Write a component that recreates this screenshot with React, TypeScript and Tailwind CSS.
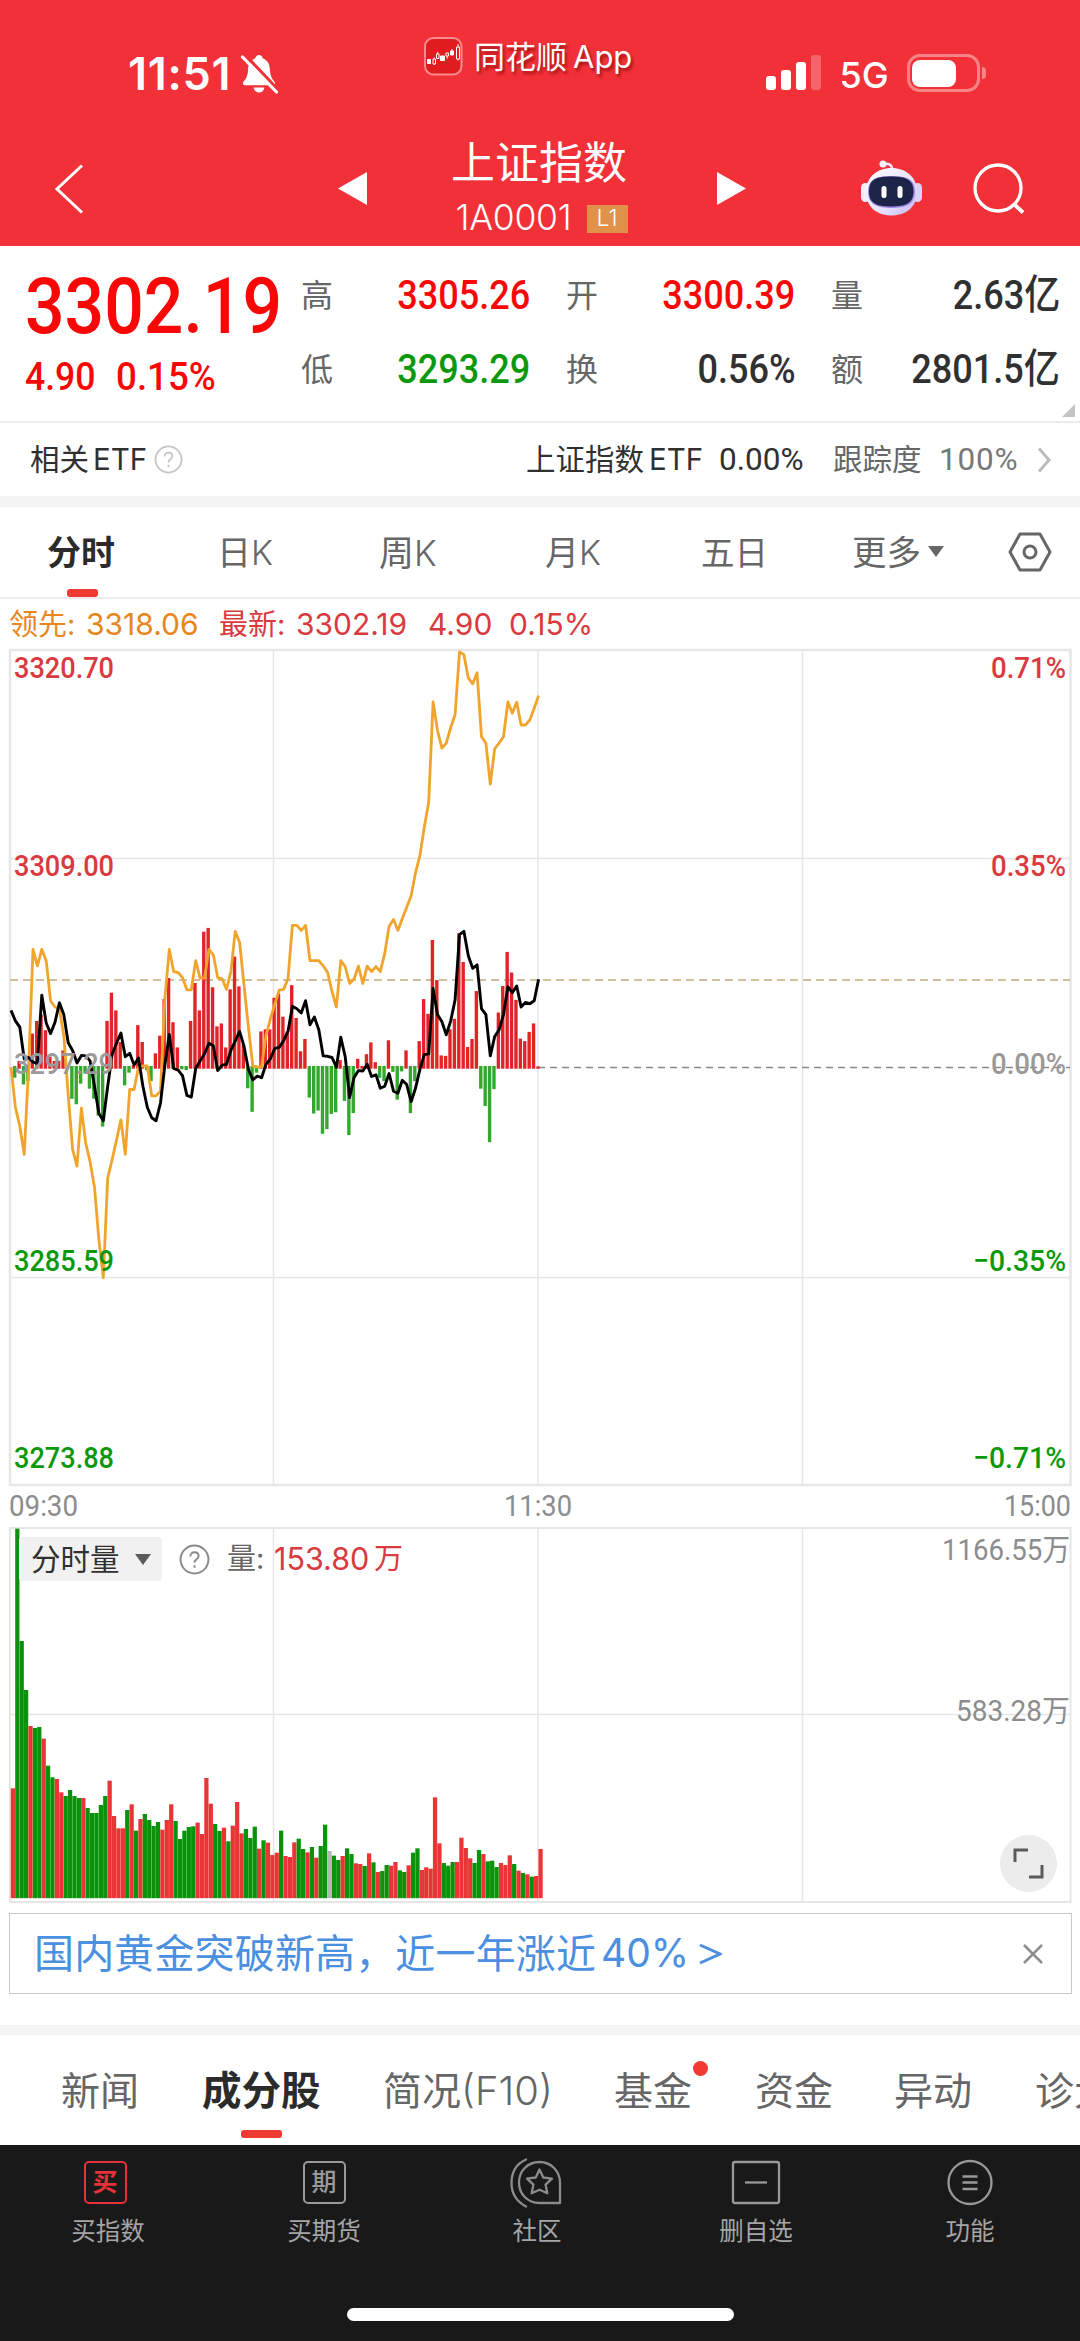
import type { ReactNode } from "react";

const SANS = "font-[Inter,'Noto_Sans_CJK_SC',sans-serif]";
const DIN = "Roboto, 'Noto Sans CJK SC', sans-serif";

/* ---------- intraday series, one value per minute from 09:30 to 11:30 ---------- */

const LEAD = [
  1015, 1110, 1155, 1222, 1015, 735, 774, 735, 762, 858, 872, 876, 940, 1080, 1210, 1250, 1112, 1195, 1240, 1300,
  1425, 1515, 1278, 1235, 1188, 1140, 1222, 1068, 1068, 1015, 1012, 1012, 1083, 1083, 1072, 850, 735, 788, 790, 802,
  831, 831, 762, 803, 803, 735, 748, 802, 805, 830, 788, 692, 718, 820, 920, 1012, 1014, 1014, 940, 900,
  865, 832, 830, 805, 678, 678, 690, 678, 762, 762, 762, 774, 790, 835, 872, 762, 776, 816, 806, 775,
  816, 775, 788, 776, 788, 745, 680, 664, 690, 662, 635, 608, 553, 512, 445, 385, 147, 215, 257, 245,
  208, 177, 28, 35, 90, 104, 78, 230, 245, 342, 258, 245, 230, 147, 174, 148, 202, 202, 190, 162, 132,
];

const PRICE = [
  880, 905, 920, 995, 992, 1003, 1006, 844, 910, 935, 908, 862, 890, 957, 975, 1005, 987, 988, 1000, 1060,
  1125, 1142, 1060, 985, 958, 934, 990, 982, 1010, 993, 1060, 1110, 1135, 1142, 1100, 1010, 937, 1018, 1022, 1035,
  1082, 1086, 1018, 1000, 983, 958, 964, 1023, 1010, 1008, 975, 953, 930, 965, 1020, 1045, 1036, 1040, 1008, 995,
  970, 968, 952, 930, 870, 876, 886, 857, 914, 896, 926, 988, 989, 992, 1015, 944, 990, 1087, 1040, 1023,
  1024, 1008, 1037, 1033, 1065, 1060, 1030, 1072, 1077, 1046, 1056, 1097, 1065, 1020, 985, 983, 828, 890, 907, 938,
  905, 855, 700, 692, 750, 780, 772, 876, 890, 988, 942, 926, 890, 824, 838, 822, 872, 861, 864, 857, 806,
];

const MOMENTUM = [
  1015, 1040, 1000, 1056, 1048, 935, 905, 890, 927, 990, 1000, 1000, 975, 1013, 1090, 1103, 1054, 1030, 1066, 1090,
  1130, 1156, 905, 838, 880, 955, 1058, 1028, 1010, 915, 955, 1022, 1048, 982, 940, 853, 803, 908, 968, 1020,
  1022, 905, 815, 880, 693, 684, 825, 918, 911, 968, 830, 752, 823, 960, 1065, 1121, 1028, 930, 925, 925,
  850, 840, 895, 930, 820, 898, 977, 948, 1087, 1125, 1118, 1173, 1162, 1126, 1122, 998, 1095, 1176, 1124, 995,
  1012, 984, 956, 1003, 1040, 1048, 951, 1026, 1092, 1025, 975, 1124, 1048, 953, 853, 888, 713, 808, 987, 988,
  925, 900, 697, 765, 967, 948, 834, 1066, 1107, 1193, 1067, 885, 822, 741, 790, 855, 947, 953, 931, 911, 1013,
];

const VOLUME = [
  925, 146, 483, 630, 738, 744, 741, 776, 857, 892, 897, 937, 948, 930, 948, 954, 954, 984, 999, 999,
  975, 948, 902, 1008, 1045, 1045, 990, 973, 1052, 1017, 1002, 1020, 1038, 1026, 1049, 1020, 973, 1023, 1077, 1052,
  1041, 1039, 1028, 1062, 894, 971, 1032, 1053, 1043, 1084, 1037, 966, 1060, 1047, 1074, 1040, 1106, 1081, 1088, 1125,
  1118, 1052, 1128, 1131, 1087, 1076, 1107, 1117, 1101, 1133, 1098, 1034, 1113, 1127, 1140, 1128, 1105, 1122, 1150, 1152,
  1158, 1120, 1147, 1176, 1173, 1155, 1157, 1146, 1171, 1176, 1156, 1118, 1105, 1170, 1162, 1166, 952, 1090, 1149, 1157,
  1146, 1146, 1073, 1104, 1135, 1149, 1110, 1122, 1144, 1142, 1161, 1149, 1155, 1126, 1152, 1172, 1179, 1183, 1190, 1188, 1107,
];

// r = rising minute, g = falling minute, n = unchanged
const VOLUME_SIDE =
  "rgggrggrggrrgggg" + "rgggggrrrrgrgrgg" + "ggrrrggggg" + "rrrrggrgrrrggg" + "rgrrrgrrrggrgrgg" + "nggrggrrgrgrggrrgg" + "rggrrrrrgggrrrrg" + "grgggrrrgrgrgrr";

const px = (i: number) => 11 + i * 4.397;
const py = (v: number) => 640 + v / 2.3758;
const line = (s: number[]) => s.map((v, i) => `${px(i).toFixed(1)},${py(v).toFixed(1)}`).join(" ");

/* ---------- small building blocks ---------- */

function Num({ children, className = "" }: { children: ReactNode; className?: string }) {
  return (
    <span className={`inline-block whitespace-nowrap font-[Roboto,'Noto_Sans_CJK_SC',sans-serif] ${className}`}>
      {children}
    </span>
  );
}

function ChartText({
  x,
  y,
  w,
  fill,
  end,
  weight = 500,
  size = 30,
  children,
}: {
  x: number;
  y: number;
  w: number;
  fill: string;
  end?: boolean;
  weight?: number;
  size?: number;
  children: string;
}) {
  return (
    <text
      x={x}
      y={y}
      fill={fill}
      fontSize={size}
      fontWeight={weight}
      fontFamily={DIN}
      textLength={w}
      lengthAdjust="spacingAndGlyphs"
      textAnchor={end ? "end" : "start"}
    >
      {children}
    </text>
  );
}

function StatusBar() {
  return (
    <div className="flex h-[120px] items-start text-white">
      <div className="ml-[128px] mt-[48px] w-[103px] origin-left whitespace-nowrap text-[45px] font-semibold leading-[52px] tracking-[0.7px]">11:51</div>
      <svg className="ml-[8px] mt-[54px] h-[40px] w-[42px]" viewBox="0 0 42 40">
        <path
          d="M20 1c-2 0-3.400 1.400-3.700 3.300C11.800 6 9.300 10 9.100 15c-.2 6-1.600 9.500-4.300 12.300-1.600 1.700-1.100 3.900 1.200 3.900h28c2.300 0 2.800-2.200 1.200-3.900C32.500 24.500 31.100 21 30.900 15c-.2-5-2.700-9-7.200-10.700C23.400 2.400 22 1 20 1zM14.600 33.500c.4 3 2.600 5 5.400 5s5-2 5.400-5z"
          fill="#fff"
        />
        <path d="M6 1 40 37" stroke="#f23037" strokeWidth="3.500" />
        <path d="M3.500 3 37.500 38" stroke="#fff" strokeWidth="3.200" strokeLinecap="round" />
      </svg>
      <svg className="ml-[143px] mt-[37px] h-[39px] w-[39px]" viewBox="0 0 39 39">
        <rect x="1" y="1" width="36.500" height="36.500" rx="8.500" fill="#e11c20" stroke="#f98a8d" strokeWidth="2" />
        <g stroke="#fff" strokeWidth="1">
          <path d="M3.500 22.500h3v4h-3zM16.500 19h4v4.500h-4zM26.500 14h3v4h-3z" fill="#fff" />
          <path d="M9 22h2.500v5H9zM12.500 17h2.500v4.500h-2.500zM22 16h2.500v3H22zM32.500 10h3v12h-3z" fill="none" />
          <path d="M10.200 20.500V22M10.200 27v1M13.700 15v2M23.200 19v2.500M28 12v2M34 7v3M34 22v1.500" fill="none" />
        </g>
      </svg>
      <div className="ml-[11px] mt-[34px] flex w-[160px] gap-[6px] whitespace-nowrap text-[31px] leading-[46px] [text-shadow:2px_3px_3px_rgba(110,0,0,0.6)]">
        <span>同花顺</span>
        <span>App</span>
      </div>
      <div className="ml-[132px] mt-[55px] flex h-[35px] items-end gap-[5.5px]">
        <div className="h-[14px] w-[9.500px] rounded-[3px] bg-white" />
        <div className="h-[20px] w-[9.500px] rounded-[3px] bg-white" />
        <div className="h-[28px] w-[9.500px] rounded-[3px] bg-white" />
        <div className="h-[35px] w-[9.500px] rounded-[3px] bg-white/25" />
      </div>
      <div className="ml-[19px] mt-[53px] w-[49px] whitespace-nowrap text-[36px] font-medium leading-[44px]">5G</div>
      <div className="ml-[18px] mt-[54px] flex items-center gap-[2px]">
        <div className="flex h-[38px] w-[73px] items-center rounded-[13px] border-[3px] border-[#f88387] pl-[2px]">
          <div className="h-[27px] w-[44px] rounded-[8px] bg-white" />
        </div>
        <div className="h-[12px] w-[4px] rounded-r-full bg-[#f88387]" />
      </div>
    </div>
  );
}

function TitleBar() {
  return (
    <div className="flex h-[126px] items-start text-white">
      <svg className="ml-[54px] mt-[44px] h-[50px] w-[30px]" viewBox="0 0 30 50" fill="none" stroke="#fff" strokeWidth="3">
        <path d="M28 1.500 3 25l25 23.500" />
      </svg>
      <svg className="ml-[254px] mt-[52px] h-[33px] w-[30px]" viewBox="0 0 30 33">
        <path d="M0 16.500 29 0v33z" fill="#fff" />
      </svg>
      <div className="ml-[82px] mt-[12px] flex w-[180px] flex-col items-center">
        <div className="mr-[2px] whitespace-nowrap text-[44px] leading-[62px]">上证指数</div>
        <div className="mt-[6px] flex items-center gap-[12px] pl-[3px]">
          <span className="w-[119px] whitespace-nowrap text-[35.500px] font-light leading-[36px] tracking-[-0.3px]">1A0001</span>
          <span className="mt-[1px] flex h-[28px] w-[41px] shrink-0 items-center justify-center bg-[#e0914a] text-[23px] font-light">L1</span>
        </div>
      </div>
      <svg className="ml-[87px] mt-[52px] h-[33px] w-[30px]" viewBox="0 0 30 33">
        <path d="M29 16.500 0 0v33z" fill="#fff" />
      </svg>
      <svg className="ml-[113px] mt-[39px] h-[58px] w-[64px]" viewBox="0 0 64 58">
        <defs>
          <linearGradient id="shell" x1="0" y1="0" x2="1" y2="1">
            <stop offset="0" stopColor="#fff" />
            <stop offset=".6" stopColor="#e6e2fb" />
            <stop offset="1" stopColor="#c3b4f5" />
          </linearGradient>
        </defs>
        <path d="M23 5c6-1 9 1 9 5" fill="none" stroke="#eeeafc" strokeWidth="2.500" />
        <circle cx="23" cy="5" r="3.500" fill="#f4f0ff" />
        <rect x="1" y="24" width="9" height="19" rx="4.500" fill="#f1effb" />
        <rect x="53" y="24" width="9" height="19" rx="4.500" fill="#dcd4f8" />
        <path d="M31.500 9C46 9 57 18 57 33S46 56.500 31.500 56.500 6 48 6 33 17 9 31.500 9z" fill="url(#shell)" />
        <path d="M31.500 17c15 0 23.500 3 23.500 15.500S47 49 31.500 49 8 45 8 32.500 16.500 17 31.500 17z" fill="#a68cec" />
        <path d="M31 17.500c15 0 22.500 3 22.500 15S45.500 47.500 31 47.500 9 44.500 9 32.500 16 17.500 31 17.500z" fill="#1c2547" />
        <rect x="21.500" y="27" width="5" height="12" rx="2.500" fill="#fff" />
        <rect x="37.500" y="27" width="5" height="12" rx="2.500" fill="#fff" />
      </svg>
      <svg className="ml-[49px] mt-[43px] h-[52px] w-[54px]" viewBox="0 0 54 52" fill="none" stroke="#fff" strokeWidth="3.300">
        <circle cx="25" cy="25" r="23" />
        <path d="m41 41 9 8.500" strokeWidth="3.800" />
      </svg>
    </div>
  );
}

function Quote({ label, value, color }: { label: string; value: string; color: string }) {
  return (
    <div className="flex h-[74px] w-[229px] items-center justify-between">
      <span className="text-[32px] text-[#666]">{label}</span>
      <Num className={`origin-right scale-x-[.88] text-[41px] font-medium ${color}`}>{value}</Num>
    </div>
  );
}

function Quotes() {
  return (
    <section className="relative flex h-[177px] shrink-0 border-b-2 border-[#ebebeb] pt-[13px]">
      <div className="w-[301px] pl-[25px]">
        <Num className="mt-[10px] block h-[76px] origin-left scale-x-[.905] text-[77px] font-medium leading-[76px] text-[#f90606]">3302.19</Num>
        <div className="mt-[11px] flex leading-[42px] text-[#f90606]">
          <Num className="w-[91px] origin-left scale-x-90 text-[39.500px] font-medium">4.90</Num>
          <Num className="origin-left scale-x-[.93] text-[39.500px] font-medium">0.15%</Num>
        </div>
      </div>
      <div className="grid h-[148px] grid-cols-[265px_265px_229px]">
        <Quote label="高" value="3305.26" color="text-[#f90606]" />
        <Quote label="开" value="3300.39" color="text-[#f90606]" />
        <Quote label="量" value="2.63亿" color="text-[#303030]" />
        <Quote label="低" value="3293.29" color="text-[#0c980c]" />
        <Quote label="换" value="0.56%" color="text-[#303030]" />
        <Quote label="额" value="2801.5亿" color="text-[#303030]" />
      </div>
      <svg className="absolute bottom-[4px] right-[5px] h-[13px] w-[13px]" viewBox="0 0 13 13">
        <path d="M13 0v13H0z" fill="#c4c4c4" />
      </svg>
    </section>
  );
}

function Help({ className, color, r }: { className: string; color: string; r: string }) {
  return (
    <svg className={className} viewBox="0 0 30 30" fill="none" stroke={color} strokeWidth={r}>
      <circle cx="15" cy="15" r="13.500" />
      <path d="M11 12c0-2.500 1.700-4 4-4s4 1.500 4 3.700c0 3-4 3.200-4 6.300" />
      <path d="M15 20.500v2.500" />
    </svg>
  );
}

function EtfRow() {
  return (
    <section className="flex h-[73px] shrink-0 items-center text-[29.500px] text-[#303030]">
      <div className="ml-[30px] flex w-[124px] gap-[4px] whitespace-nowrap">
        <span>相关</span>
        <span className="text-[29.500px]">ETF</span>
      </div>
      <Help className="h-[29px] w-[29px]" color="#c4c4c4" r="1.8" />
      <div className="ml-[343px] flex w-[193px] gap-[5px] whitespace-nowrap">
        <span>上证指数</span>
        <span className="text-[29.500px]">ETF</span>
      </div>
      <Num className="w-[114px] text-[31.500px]">0.00%</Num>
      <span className="w-[106px] whitespace-nowrap text-[#666]">跟踪度</span>
      <Num className="w-[98px] text-[31.500px] tracking-[0.8px] text-[#777]">100%</Num>
      <svg className="h-[26px] w-[15px]" viewBox="0 0 15 26" fill="none" stroke="#bbb" strokeWidth="3">
        <path d="m2 1.500 10 11.500L2 24.500" />
      </svg>
    </section>
  );
}

function PeriodTabs() {
  return (
    <nav className="flex h-[92px] shrink-0 border-b-2 border-[#ebebeb] text-[33.500px] leading-[92px] text-[#666]">
      <div className="ml-[47px] flex w-[170px] flex-col">
        <span className="text-[34px] font-bold text-[#2b2b2b]">分时</span>
        <span className="-mt-[10px] ml-[20px] h-[8px] w-[31px] shrink-0 rounded-[3px] bg-[#ee3a32]" />
      </div>
      <span className="w-[162px] text-[34px]">日<span className="font-light">K</span></span>
      <span className="w-[166px] text-[35px]">周<span className="font-light">K</span></span>
      <span className="w-[156px] text-[34px]">月<span className="font-light">K</span></span>
      <span className="w-[151px]">五日</span>
      <span className="w-[76px] whitespace-nowrap text-[34.500px]">更多</span>
      <svg className="mt-[39px] h-[11px] w-[16px]" viewBox="0 0 16 11">
        <path d="M0 0h16L8 11z" fill="#666" />
      </svg>
      <svg className="ml-[64px] mt-[25px] h-[40px] w-[44px]" viewBox="0 0 44 40" fill="none" stroke="#666" strokeWidth="3">
        <path d="M12 2h20l10 18-10 18H12L2 20z" strokeLinejoin="round" />
        <circle cx="22" cy="20" r="6" />
      </svg>
    </nav>
  );
}

function Legend() {
  return (
    <div className="flex h-[46px] shrink-0 items-center whitespace-nowrap pt-[5px] text-[30px] text-[#d93a3e]">
      <span className="ml-[9px] w-[77px] text-[29px] text-[#e8861c]">领先:</span>
      <span className="w-[133px] text-[#e8861c]">3318.06</span>
      <span className="w-[77px] text-[29px]">最新:</span>
      <span className="w-[132px]">3302.19</span>
      <span className="w-[81px]">4.90</span>
      <span>0.15%</span>
    </div>
  );
}

function PriceChart() {
  const red = "#d93a3e";
  const green = "#0c980c";
  return (
    <svg className="block h-[880px] w-[1080px] shrink-0" viewBox="0 645 1080 880">
      <g fill="none" stroke="#e6e6e6" strokeWidth="2">
        <rect x="10" y="650" width="1060.500" height="835" strokeWidth="2.500" />
        <path d="M10 858.500H1070M10 1277.500H1070M273.500 650V1485M538 650V1485M802.500 650V1485" strokeWidth="1.500" />
      </g>
      <path d="M10 980H1070" stroke="#cfbf9c" strokeWidth="1.800" strokeDasharray="8 5" />
      <path d="M538 1067.500H1070" stroke="#8a8a8a" strokeWidth="1.700" strokeDasharray="7 5" />
      {MOMENTUM.map((v, i) =>
        i === 0 ? null : (
          <line
            key={i}
            x1={px(i) - 0.7}
            x2={px(i) - 0.7}
            y1={v < 1015 ? 1068.700 : 1066}
            y2={py(v)}
            stroke={v < 1015 ? "#e22428" : "#33a92c"}
            strokeWidth="3.400"
          />
        ),
      )}
      <polyline points={line(LEAD)} fill="none" stroke="#f0a42c" strokeWidth="2.800" strokeLinejoin="round" />
      <polyline points={line(PRICE)} fill="none" stroke="#000" strokeWidth="2.900" strokeLinejoin="round" />
      <ChartText x={14} y={678} w={100} fill={red}>3320.70</ChartText>
      <ChartText x={14} y={875.500} w={100} fill={red}>3309.00</ChartText>
      <ChartText x={14} y={1073.500} w={100} fill="#9a9a9a">3297.29</ChartText>
      <ChartText x={14} y={1270.500} w={100} fill={green}>3285.59</ChartText>
      <ChartText x={14} y={1468} w={100} fill={green}>3273.88</ChartText>
      <ChartText end x={1066} y={678} w={75} fill={red}>0.71%</ChartText>
      <ChartText end x={1066} y={875.500} w={75} fill={red}>0.35%</ChartText>
      <ChartText end x={1066} y={1073.500} w={75} fill="#999">0.00%</ChartText>
      <ChartText end x={1066} y={1270.500} w={93} fill={green}>−0.35%</ChartText>
      <ChartText end x={1066} y={1468} w={93} fill={green}>−0.71%</ChartText>
      <ChartText x={9} y={1516} w={69} fill="#8c8c8c" weight={400}>09:30</ChartText>
      <ChartText x={504} y={1516} w={68} fill="#8c8c8c" weight={400}>11:30</ChartText>
      <ChartText end x={1071} y={1516} w={67} fill="#8c8c8c" weight={400}>15:00</ChartText>
    </svg>
  );
}

function VolumeChart() {
  const fills: Record<string, string> = { r: "#e93535", g: "#0a930a", n: "#b5b5b5" };
  return (
    <div className="relative h-[388px] shrink-0">
      <svg className="block h-[388px] w-[1080px]" viewBox="0 1525 1080 388">
        <g fill="none" stroke="#e6e6e6" strokeWidth="1.500">
          <rect x="10" y="1528" width="1060.500" height="374" strokeWidth="2" />
          <path d="M10 1714.500H1070M273.500 1528V1902M538 1528V1902M802.500 1528V1902" />
        </g>
        {VOLUME.map((v, i) => (
          <rect
            key={i}
            x={10.800 + i * 4.397}
            y={1480 + v / 3}
            width="4.250"
            height={(1253 - v) / 3 + 0.5}
            fill={fills[VOLUME_SIDE[i]]}
          />
        ))}
        <ChartText end x={1070} y={1560} w={128} fill="#8c8c8c" weight={400}>1166.55万</ChartText>
        <ChartText end x={1070} y={1720.500} w={114} fill="#8c8c8c" weight={400}>583.28万</ChartText>
      </svg>
      <div className="absolute left-[19px] top-[12px] flex h-[44px] items-center text-[29px]">
        <div className="flex h-[44px] w-[143px] items-center rounded-[4px] bg-[#f1f1f1] pl-[12px] pt-[1px] text-[29.500px] text-[#303030]">
          <span className="w-[104px]">分时量</span>
          <svg className="h-[11px] w-[16px]" viewBox="0 0 16 11">
            <path d="M0 0h16L8 11z" fill="#5c5c5c" />
          </svg>
        </div>
        <Help className="ml-[17px] h-[31px] w-[31px]" color="#8a8a8a" r="1.9" />
        <span className="ml-[17px] w-[47px] whitespace-nowrap text-[#666]">量:</span>
        <span className="w-[100px] whitespace-nowrap text-[30.500px] text-[#d93a3e]">153.80</span>
        <span className="text-[#d93a3e]">万</span>
      </div>
      <div className="absolute left-[1000px] top-[310px] flex h-[57px] w-[57px] items-center justify-center rounded-full bg-[#ececec]">
        <svg className="h-[31px] w-[31px]" viewBox="0 0 31 31" fill="none" stroke="#5a5a5a" strokeWidth="3">
          <path d="M2 14V2h13M29 17v12H16" />
        </svg>
      </div>
    </div>
  );
}

function Banner() {
  return (
    <div className="ml-[9px] flex h-[81px] w-[1063px] shrink-0 items-center border-[1.500px] border-[#cacaca] text-[40px] text-[#4a8fe0]">
      <span className="ml-[24px] w-[567px] whitespace-nowrap tracking-[0.15px]">国内黄金突破新高，近一年涨近</span>
      <span className="w-[98px] whitespace-nowrap text-[39px]">40%</span>
      <svg className="h-[22px] w-[23px]" viewBox="0 0 23 22" fill="none" stroke="#4a8fe0" strokeWidth="3">
        <path d="m1 2 20 9-20 9" />
      </svg>
      <svg className="ml-[301px] h-[20px] w-[20px]" viewBox="0 0 20 20" stroke="#8e8e8e" strokeWidth="2.500">
        <path d="m1 1 18 18M19 1 1 19" />
      </svg>
    </div>
  );
}

function InfoTabs() {
  return (
    <nav className="flex h-[110px] shrink-0 overflow-hidden whitespace-nowrap text-[39px] leading-[112px] text-[#666]">
      <span className="ml-[61px] w-[141px] shrink-0">新闻</span>
      <div className="flex w-[181px] shrink-0 flex-col">
        <span className="h-[95px] text-[39.500px] font-bold text-[#2b2b2b]">成分股</span>
        <span className="ml-[39px] h-[8px] w-[41px] rounded-[3px] bg-[#ee3a32]" />
      </div>
      <div className="flex w-[231px] shrink-0">
        <span>简况</span>
        <span className="text-[40px] font-light">(F10)</span>
      </div>
      <div className="relative w-[141px] shrink-0">
        基金
        <span className="absolute left-[79px] top-[26px] h-[15px] w-[15px] rounded-full bg-[#f03a33]" />
      </div>
      <span className="w-[139px] shrink-0">资金</span>
      <span className="w-[141px] shrink-0">异动</span>
      <span className="shrink-0">诊大</span>
    </nav>
  );
}

function Action({ icon, label, box }: { icon: ReactNode; label: string; box: string }) {
  return (
    <div className={`flex flex-col items-center ${box}`}>
      {icon}
      <span className="whitespace-nowrap text-[24.500px] leading-[32px] text-[#a5a5a5]">{label}</span>
    </div>
  );
}

function BottomBar() {
  const icon = "mb-[6px] h-[54px] w-[54px]";
  return (
    <footer className="flex h-[196px] shrink-0 flex-col bg-[#191919]">
      <div className="flex h-[163px] items-start pt-[10px]">
        <Action
          box="ml-[58px] w-[100px] pt-[1px]"
          label="买指数"
          icon={
            <div className="mb-[11px] mr-[6px] mt-[5px] flex h-[43px] w-[43px] items-center justify-center rounded-[5px] border-[2.500px] border-[#e5323a] text-[25px] font-bold leading-none text-[#e5323a]">买</div>
          }
        />
        <Action
          box="ml-[116px] w-[100px]"
          label="买期货"
          icon={
            <div className="mb-[11px] mt-[6px] flex h-[43px] w-[43px] items-center justify-center rounded-[5px] border-[2.500px] border-[#999] text-[25px] font-medium leading-none text-[#999]">期</div>
          }
        />
        <Action
          box="ml-[113px] w-[100px]"
          label="社区"
          icon={
            <svg className={`${icon} mr-[4px]`} viewBox="0 0 54 54" fill="none" stroke="#8c8c8c" strokeWidth="2.300">
              <path d="M31.500 7C43 7 52 16 52 28v20H31.500C19.500 48 11 39 11 27.500S19.500 7 31.500 7z" strokeLinejoin="round" />
              <path d="M18 4.500C8 9 3.500 17.500 3.500 28S8.500 46.500 18 51.500" strokeLinecap="round" />
              <path d="m31.500 14.500 3.800 8 8.700 1.100-6.400 6 1.700 8.700-7.800-3.500-7.800 3.500 1.700-8.700-6.400-6 8.700-1.100z" strokeLinejoin="round" />
            </svg>
          }
        />
        <Action
          box="ml-[119px] w-[100px]"
          label="删自选"
          icon={
            <svg className={icon} viewBox="0 0 54 54" fill="none" stroke="#999" strokeWidth="2.300">
              <rect x="4" y="7" width="46" height="41" rx="2" />
              <path d="M16 27.500h22" />
            </svg>
          }
        />
        <Action
          box="ml-[114px] w-[100px]"
          label="功能"
          icon={
            <svg className={icon} viewBox="0 0 54 54" fill="none" stroke="#999" strokeWidth="2.300">
              <circle cx="27" cy="27.500" r="21.500" />
              <path d="M19.500 21.500h15M19.500 27.500h15M19.500 34h15" />
            </svg>
          }
        />
      </div>
      <div className="mx-auto h-[13px] w-[387px] rounded-full bg-white" />
    </footer>
  );
}

export default function App() {
  return (
    <main className={`flex h-[2341px] w-[1080px] flex-col overflow-hidden bg-white ${SANS}`}>
      <header className="h-[246px] shrink-0 bg-[#f23037]">
        <StatusBar />
        <TitleBar />
      </header>
      <Quotes />
      <EtfRow />
      <div className="h-[11px] shrink-0 bg-[#f4f4f4]" />
      <PeriodTabs />
      <Legend />
      <PriceChart />
      <VolumeChart />
      <Banner />
      <div className="mt-[31px] h-[10px] shrink-0 bg-[#f4f4f4]" />
      <InfoTabs />
      <BottomBar />
    </main>
  );
}
